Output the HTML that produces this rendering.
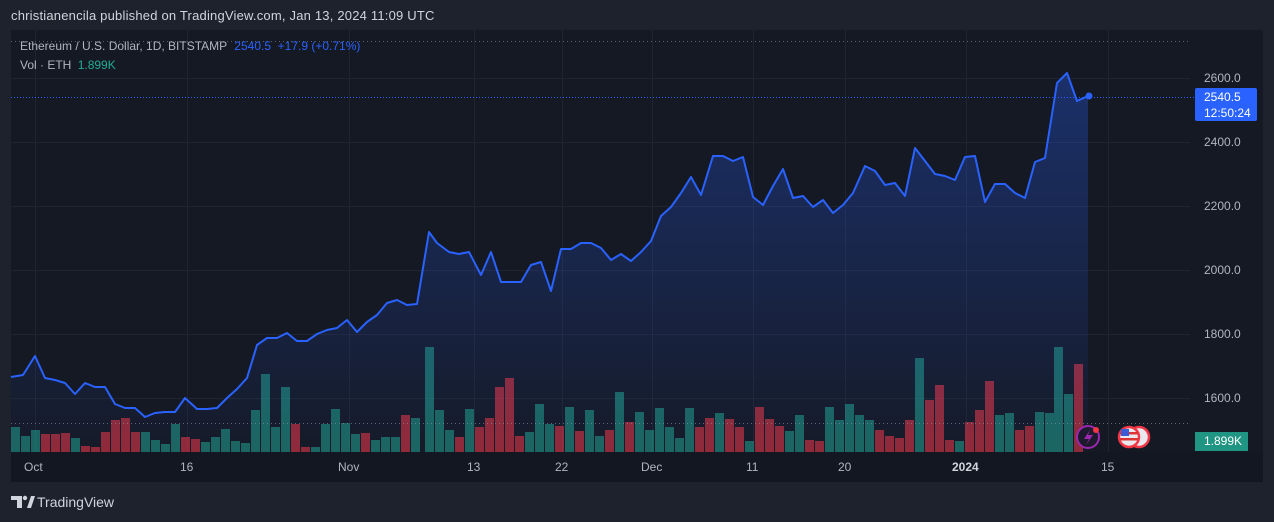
<!DOCTYPE html>
<html><head><meta charset="utf-8"><style>
html,body{margin:0;padding:0;background:#1e222d;width:1274px;height:522px;overflow:hidden;font-family:"Liberation Sans",sans-serif;}
.t{position:absolute;white-space:nowrap}
</style></head><body>
<div class="t" style="left:11px;top:8px;font-size:13px;color:#d1d4dc;letter-spacing:0.2px">christianencila published on TradingView.com, Jan 13, 2024 11:09 UTC</div>
<svg width="1274" height="522" style="position:absolute;left:0;top:0" xmlns="http://www.w3.org/2000/svg">
<defs>
<linearGradient id="ga" x1="0" y1="0" x2="0" y2="1"><stop offset="0" stop-color="#2962ff" stop-opacity="0.32"/><stop offset="1" stop-color="#2962ff" stop-opacity="0.02"/></linearGradient>
</defs>
<rect x="11" y="30" width="1252" height="452" fill="#151924"/>
<rect x="11" y="452" width="1252" height="30" fill="#131722"/>
<g stroke="#20242f" stroke-width="1">
<line x1="11" y1="78.5" x2="1190" y2="78.5"/><line x1="11" y1="142.5" x2="1190" y2="142.5"/><line x1="11" y1="206.5" x2="1190" y2="206.5"/><line x1="11" y1="270.5" x2="1190" y2="270.5"/><line x1="11" y1="334.5" x2="1190" y2="334.5"/><line x1="11" y1="398.5" x2="1190" y2="398.5"/>
<line x1="35.5" y1="30" x2="35.5" y2="452"/><line x1="187.5" y1="30" x2="187.5" y2="452"/><line x1="349.5" y1="30" x2="349.5" y2="452"/><line x1="474.5" y1="30" x2="474.5" y2="452"/><line x1="562.5" y1="30" x2="562.5" y2="452"/><line x1="652.5" y1="30" x2="652.5" y2="452"/><line x1="753.5" y1="30" x2="753.5" y2="452"/><line x1="845.5" y1="30" x2="845.5" y2="452"/><line x1="966.5" y1="30" x2="966.5" y2="452"/><line x1="1108.5" y1="30" x2="1108.5" y2="452"/>
</g>
<line x1="11" y1="41.5" x2="1190" y2="41.5" stroke="#5d606b" stroke-dasharray="1 3"/>
<g fill-opacity="0.75">
<g fill="#22ab94" opacity="0.7">
<rect x="11" y="427" width="9" height="25"/><rect x="21" y="436" width="9" height="16"/><rect x="31" y="430" width="9" height="22"/><rect x="71" y="438" width="9" height="14"/><rect x="141" y="432" width="9" height="20"/><rect x="151" y="440" width="9" height="12"/><rect x="161" y="444" width="9" height="8"/><rect x="171" y="424" width="9" height="28"/><rect x="201" y="442" width="9" height="10"/><rect x="211" y="437" width="9" height="15"/><rect x="221" y="429" width="9" height="23"/><rect x="231" y="441" width="9" height="11"/><rect x="241" y="443" width="9" height="9"/><rect x="251" y="410" width="9" height="42"/><rect x="261" y="374" width="9" height="78"/><rect x="271" y="427" width="9" height="25"/><rect x="281" y="387" width="9" height="65"/><rect x="311" y="447" width="9" height="5"/><rect x="321" y="424" width="9" height="28"/><rect x="331" y="409" width="9" height="43"/><rect x="341" y="423" width="9" height="29"/><rect x="351" y="434" width="9" height="18"/><rect x="371" y="440" width="9" height="12"/><rect x="381" y="437" width="9" height="15"/><rect x="391" y="437" width="9" height="15"/><rect x="411" y="418" width="9" height="34"/><rect x="425" y="347" width="9" height="105"/><rect x="435" y="410" width="9" height="42"/><rect x="445" y="430" width="9" height="22"/><rect x="465" y="409" width="9" height="43"/><rect x="525" y="432" width="9" height="20"/><rect x="535" y="404" width="9" height="48"/><rect x="545" y="424" width="9" height="28"/><rect x="565" y="407" width="9" height="45"/><rect x="585" y="410" width="9" height="42"/><rect x="595" y="436" width="9" height="16"/><rect x="615" y="392" width="9" height="60"/><rect x="635" y="412" width="9" height="40"/><rect x="645" y="430" width="9" height="22"/><rect x="655" y="408" width="9" height="44"/><rect x="665" y="427" width="9" height="25"/><rect x="675" y="438" width="9" height="14"/><rect x="685" y="408" width="9" height="44"/><rect x="715" y="413" width="9" height="39"/><rect x="745" y="441" width="9" height="11"/><rect x="785" y="431" width="9" height="21"/><rect x="795" y="415" width="9" height="37"/><rect x="825" y="407" width="9" height="45"/><rect x="835" y="420" width="9" height="32"/><rect x="845" y="404" width="9" height="48"/><rect x="855" y="415" width="9" height="37"/><rect x="865" y="420" width="9" height="32"/><rect x="915" y="358" width="9" height="94"/><rect x="955" y="441" width="9" height="11"/><rect x="995" y="415" width="9" height="37"/><rect x="1005" y="413" width="9" height="39"/><rect x="1035" y="412" width="9" height="40"/><rect x="1045" y="413" width="9" height="39"/><rect x="1054" y="347" width="9" height="105"/><rect x="1064" y="394" width="9" height="58"/>
</g>
<g fill="#f23645" opacity="0.75">
<rect x="41" y="434" width="9" height="18"/><rect x="51" y="434" width="9" height="18"/><rect x="61" y="433" width="9" height="19"/><rect x="81" y="446" width="9" height="6"/><rect x="91" y="447" width="9" height="5"/><rect x="101" y="432" width="9" height="20"/><rect x="111" y="420" width="9" height="32"/><rect x="121" y="418" width="9" height="34"/><rect x="131" y="432" width="9" height="20"/><rect x="181" y="437" width="9" height="15"/><rect x="191" y="439" width="9" height="13"/><rect x="291" y="424" width="9" height="28"/><rect x="301" y="447" width="9" height="5"/><rect x="361" y="433" width="9" height="19"/><rect x="401" y="415" width="9" height="37"/><rect x="455" y="437" width="9" height="15"/><rect x="475" y="427" width="9" height="25"/><rect x="485" y="418" width="9" height="34"/><rect x="495" y="387" width="9" height="65"/><rect x="505" y="378" width="9" height="74"/><rect x="515" y="436" width="9" height="16"/><rect x="555" y="426" width="9" height="26"/><rect x="575" y="431" width="9" height="21"/><rect x="605" y="430" width="9" height="22"/><rect x="625" y="422" width="9" height="30"/><rect x="695" y="427" width="9" height="25"/><rect x="705" y="418" width="9" height="34"/><rect x="725" y="419" width="9" height="33"/><rect x="735" y="427" width="9" height="25"/><rect x="755" y="407" width="9" height="45"/><rect x="765" y="419" width="9" height="33"/><rect x="775" y="426" width="9" height="26"/><rect x="805" y="440" width="9" height="12"/><rect x="815" y="441" width="9" height="11"/><rect x="875" y="430" width="9" height="22"/><rect x="885" y="436" width="9" height="16"/><rect x="895" y="438" width="9" height="14"/><rect x="905" y="420" width="9" height="32"/><rect x="925" y="400" width="9" height="52"/><rect x="935" y="385" width="9" height="67"/><rect x="945" y="440" width="9" height="12"/><rect x="965" y="422" width="9" height="30"/><rect x="975" y="410" width="9" height="42"/><rect x="985" y="381" width="9" height="71"/><rect x="1015" y="430" width="9" height="22"/><rect x="1025" y="426" width="9" height="26"/><rect x="1074" y="364" width="9" height="88"/>
</g>
</g>
<line x1="11" y1="423.5" x2="1190" y2="423.5" stroke="#9598a1" stroke-opacity="0.6" stroke-dasharray="1 3"/>
<polygon fill="url(#ga)" points="11,452 11,377 23,375 35,356 45,378 55,380 65,383 75,394 85,383 95,387 105,387 115,404 125,408 135,408 145,417 155,413 165,412 175,412 185,398 197,409 207,409 217,408 227,398 237,389 247,378 257,345 267,338 277,338 287,333 297,341 307,341 317,334 327,330 337,328 347,320 357,332 367,322 377,315 387,303 397,300 407,305 417,304 429,232 437,243 449,252 459,254 469,252 481,275 491,252 501,282 511,282 521,282 531,265 541,262 551,291 561,249 571,249 581,243 591,243 601,248 611,260 621,254 631,261 641,252 651,241 661,216 671,207 681,193 691,177 701,195 713,156 723,156 733,161 743,157 753,197 763,205 773,186 783,169 793,198 803,196 813,207 823,200 833,213 843,205 853,193 865,166 875,171 885,185 895,183 905,196 915,148 925,161 935,174 945,176 955,180 965,157 975,156 985,202 995,184 1005,184 1015,193 1025,198 1035,162 1045,158 1057,83 1067,73 1077,101 1088,96 1088,452"/>
<line x1="11" y1="97.5" x2="1195" y2="97.5" stroke="#2962ff" stroke-dasharray="1 2"/>
<polyline fill="none" stroke="#2962ff" stroke-width="2" stroke-linejoin="round" points="11,377 23,375 35,356 45,378 55,380 65,383 75,394 85,383 95,387 105,387 115,404 125,408 135,408 145,417 155,413 165,412 175,412 185,398 197,409 207,409 217,408 227,398 237,389 247,378 257,345 267,338 277,338 287,333 297,341 307,341 317,334 327,330 337,328 347,320 357,332 367,322 377,315 387,303 397,300 407,305 417,304 429,232 437,243 449,252 459,254 469,252 481,275 491,252 501,282 511,282 521,282 531,265 541,262 551,291 561,249 571,249 581,243 591,243 601,248 611,260 621,254 631,261 641,252 651,241 661,216 671,207 681,193 691,177 701,195 713,156 723,156 733,161 743,157 753,197 763,205 773,186 783,169 793,198 803,196 813,207 823,200 833,213 843,205 853,193 865,166 875,171 885,185 895,183 905,196 915,148 925,161 935,174 945,176 955,180 965,157 975,156 985,202 995,184 1005,184 1015,193 1025,198 1035,162 1045,158 1057,83 1067,73 1077,101 1088,96"/>
<circle cx="1089" cy="96" r="3.5" fill="#2962ff"/>
<circle cx="1088" cy="437" r="11" fill="#1e1a2e" stroke="#9c27b0" stroke-width="2"/>
<path d="M1090 430 L1084 439 L1089 439 L1086 445 L1093 435 L1088 435 Z" fill="#9c27b0"/>
<circle cx="1096" cy="430" r="3" fill="#f23645"/>
<circle cx="1139" cy="437" r="10" fill="#e8e8ee" stroke="#f23645" stroke-width="2.5"/>
<circle cx="1129" cy="437" r="10" fill="#e8e8ee" stroke="#f23645" stroke-width="2.5"/>
<rect x="1120" y="432" width="18" height="2.5" fill="#d33"/><rect x="1120" y="438" width="18" height="2.5" fill="#d33"/>
<rect x="1121" y="429" width="8" height="7" fill="#3c5bd6"/>
<rect x="1195" y="88" width="62" height="33" rx="2" fill="#2962ff"/>
<rect x="1195" y="432" width="53" height="19" fill="#22ab94" fill-opacity="0.85"/>
<path d="M11 496 H22 V508 H17 V500 H11 Z" fill="#d1d4dc"/>
<circle cx="25" cy="498" r="2.2" fill="#d1d4dc"/>
<path d="M27 508 L31 496 H35 L31 508 Z" fill="#d1d4dc"/>
</svg>
<div class="t" style="left:20px;top:39px;font-size:12px;color:#b2b5be">Ethereum / U.S. Dollar, 1D, BITSTAMP <span style="color:#2962ff;margin-left:4px">2540.5 &nbsp;+17.9 (+0.71%)</span></div>
<div class="t" style="left:20px;top:58px;font-size:12px;color:#b2b5be">Vol · ETH <span style="color:#22ab94;margin-left:3px">1.899K</span></div>
<div class="t" style="left:1204px;top:71px;font-size:12px;color:#b2b5be">2600.0</div>
<div class="t" style="left:1204px;top:135px;font-size:12px;color:#b2b5be">2400.0</div>
<div class="t" style="left:1204px;top:199px;font-size:12px;color:#b2b5be">2200.0</div>
<div class="t" style="left:1204px;top:263px;font-size:12px;color:#b2b5be">2000.0</div>
<div class="t" style="left:1204px;top:327px;font-size:12px;color:#b2b5be">1800.0</div>
<div class="t" style="left:1204px;top:391px;font-size:12px;color:#b2b5be">1600.0</div>
<div class="t" style="left:1204px;top:90px;font-size:12px;color:#fff">2540.5</div>
<div class="t" style="left:1204px;top:106px;font-size:12px;color:#fff">12:50:24</div>
<div class="t" style="left:1204px;top:434px;font-size:12px;color:#fff">1.899K</div>
<div class="t" style="left:24px;top:460px;font-size:12px;color:#b2b5be">Oct</div>
<div class="t" style="left:180px;top:460px;font-size:12px;color:#b2b5be">16</div>
<div class="t" style="left:338px;top:460px;font-size:12px;color:#b2b5be">Nov</div>
<div class="t" style="left:467px;top:460px;font-size:12px;color:#b2b5be">13</div>
<div class="t" style="left:555px;top:460px;font-size:12px;color:#b2b5be">22</div>
<div class="t" style="left:641px;top:460px;font-size:12px;color:#b2b5be">Dec</div>
<div class="t" style="left:746px;top:460px;font-size:12px;color:#b2b5be">11</div>
<div class="t" style="left:838px;top:460px;font-size:12px;color:#b2b5be">20</div>
<div class="t" style="left:952px;top:460px;font-size:12px;color:#d1d4dc;font-weight:bold">2024</div>
<div class="t" style="left:1101px;top:460px;font-size:12px;color:#b2b5be">15</div>
<div class="t" style="left:37px;top:494px;font-size:14px;color:#d1d4dc">TradingView</div>
</body></html>
